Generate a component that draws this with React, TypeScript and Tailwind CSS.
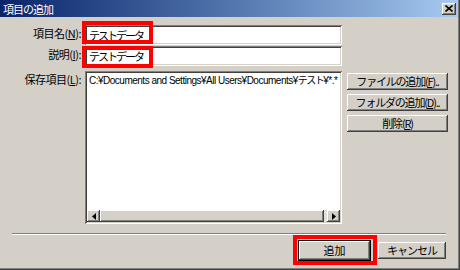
import React from 'react'

const raised =
  'bg-[#d4d0c8] shadow-[inset_-1px_-1px_0_#404040,inset_1px_1px_0_#ffffff,inset_-2px_-2px_0_#808080,inset_2px_2px_0_#d4d0c8]'
const sunken =
  'bg-white shadow-[inset_1px_1px_0_#808080,inset_-1px_-1px_0_#ffffff,inset_2px_2px_0_#404040,inset_-2px_-2px_0_#d4d0c8]'

function Label({ text, k, tail }: { text: string; k: string; tail: string }) {
  return (
    <div className="w-[85px] shrink-0 pr-[4px] pt-[1px] text-right leading-[14px] tracking-[-0.5px]">
      {text}(<u>{k}</u>){tail}
    </div>
  )
}

function SideButton({ text, k, tail }: { text: string; k: string; tail: string }) {
  return (
    <div className={`${raised} flex h-[17px] w-[101px] items-center justify-center whitespace-nowrap leading-[13px] tracking-[-1.2px]`}>
      {text}(<u>{k}</u>){tail}
    </div>
  )
}

function ScrollArrow({ dir }: { dir: 'left' | 'right' }) {
  return (
    <div className={`${raised} flex h-[12px] w-[13px] shrink-0 items-center justify-center`}>
      <svg width="4" height="7" viewBox="0 0 4 7">
        {dir === 'left' ? <polygon points="4,0 4,7 0,3.5" fill="#000" /> : <polygon points="0,0 0,7 4,3.5" fill="#000" />}
      </svg>
    </div>
  )
}

export default function App() {
  return (
    <div className="relative h-[270px] w-[460px] overflow-hidden border-b border-r border-[#404040] bg-[#d4d0c8] font-['Noto_Sans_CJK_JP',sans-serif] text-[11px] text-black">
      <div className="flex h-full flex-col border-b border-r border-[#808080]">
        {/* title bar */}
        <div className="flex h-[17px] shrink-0 items-center justify-between bg-linear-to-r from-[#0a246a] to-[#a6caf0] pl-[3px] pr-[2px]">
          <span className="text-[11px] leading-[14px] tracking-[-1px] text-white">項目の追加</span>
          <div className={`${raised} flex h-[12px] w-[14px] items-center justify-center`}>
            <svg width="8" height="7" viewBox="0 0 8 7">
              <path d="M0.5 0.5 L7.5 6.5 M7.5 0.5 L0.5 6.5" stroke="#000" strokeWidth="1.6" />
            </svg>
          </div>
        </div>

        <div className="flex flex-col pt-[8px]">
          <div className="flex h-[20px]">
            <Label text="項目名" k="N" tail=":" />
            <div className={`${sunken} flex w-[257px] items-center pl-[4px] text-[11px] tracking-[-2px]`}>テストデータ</div>
          </div>
          <div className="mt-[1px] flex h-[20px]">
            <Label text="説明" k="I" tail=":" />
            <div className={`${sunken} flex w-[257px] items-center pl-[4px] text-[11px] tracking-[-2px]`}>テストデータ</div>
          </div>

          <div className="mt-[5px] flex">
            <Label text="保存項目" k="L" tail=":" />
            <div className={`${sunken} flex h-[153px] w-[257px] flex-col p-[2px]`}>
              <div className="flex-1 overflow-hidden whitespace-nowrap pl-[2px] font-['Liberation_Sans',sans-serif] text-[10px] leading-[13px] tracking-[-0.5px]">
                C:¥Documents and Settings¥All Users¥Documents¥<span className="font-['Noto_Sans_CJK_JP',sans-serif] tracking-[-1.5px]">テスト</span>¥*.*
              </div>
              <div className="flex h-[12px] bg-[#e4e1dc]">
                <ScrollArrow dir="left" />
                <div className={`${raised} flex-1`} />
                <div className="w-[3px]" />
                <ScrollArrow dir="right" />
              </div>
            </div>
            <div className="ml-[5px] mt-[2px] flex flex-col gap-[4px]">
              <SideButton text="ファイルの追加" k="F" tail=".." />
              <SideButton text="フォルダの追加" k="D" tail=".." />
              <SideButton text="削除" k="R" tail="" />
            </div>
          </div>

          <div className="ml-[12px] mt-[9px] h-[2px] w-[434px] border-b border-t border-b-white border-t-[#808080]" />

          <div className="mt-[5px] flex pl-[298px]">
            <div className="h-[21px] w-[73px] border border-black">
              <div className={`${raised} flex h-full items-center justify-center leading-[13px]`}>追加</div>
            </div>
            <div className={`${raised} ml-[7px] mt-[2px] flex h-[17px] w-[68px] items-center justify-center leading-[13px] tracking-[-1px]`}>
              キャンセル
            </div>
          </div>
        </div>
      </div>

      {/* red annotation boxes */}
      <div className="absolute left-[82px] top-[21px] h-[23px] w-[71px] border-4 border-[#ff0000]" />
      <div className="absolute left-[82px] top-[46px] h-[22px] w-[71px] border-4 border-[#ff0000]" />
      <div className="absolute left-[293px] top-[235px] h-[30px] w-[84px] border-4 border-[#ff0000]" />
    </div>
  )
}
